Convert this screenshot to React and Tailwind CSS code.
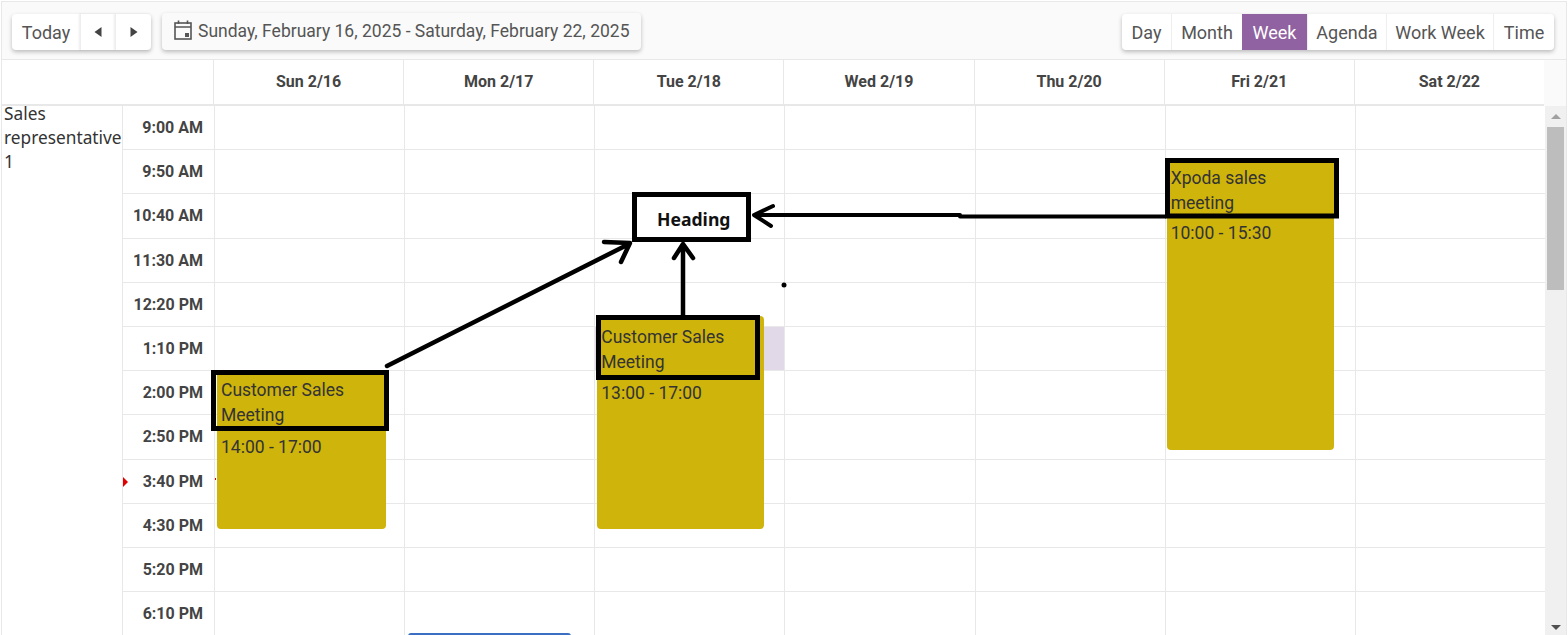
import React from 'react';

const days = ['Sun 2/16', 'Mon 2/17', 'Tue 2/18', 'Wed 2/19', 'Thu 2/20', 'Fri 2/21', 'Sat 2/22'];
const times = ['9:00 AM', '9:50 AM', '10:40 AM', '11:30 AM', '12:20 PM', '1:10 PM', '2:00 PM', '2:50 PM', '3:40 PM', '4:30 PM', '5:20 PM', '6:10 PM'];
const views = ['Day', 'Month', 'Week', 'Agenda', 'Work Week', 'Time'];
const viewWidths = ['w-[49px]', 'w-[71px]', 'w-[65px]', 'w-[79px]', 'w-[107px]', 'w-[61px]'];

const Event = ({ title, time, className, gap }) => (
  <div className={`absolute rounded-[4px] bg-[#cfb40b] text-[#333] text-[17.5px] leading-[25px] ${className}`}>
    <div>{title}</div>
    <div className={gap}>{time}</div>
  </div>
);

const DayColumn = ({ index }) => (
  <div className="relative flex-1 min-w-0 border-l border-[#e8e8e8]">
    {times.map((t, row) => (
      <div
        key={t}
        className={`h-[44.2px] border-b border-[#e8e8e8] ${index === 2 && row === 5 ? 'bg-[#e2d9e8]' : ''}`}
      />
    ))}
    {index === 0 && (
      <>
        <div className="absolute left-0 top-[372px] w-[1px] h-[2px] bg-[#e00000]" />
        <Event className="left-[2px] top-[265px] w-[169px] h-[158px] pt-[7px] pl-[4px]" gap="mt-[7px]" title={<>Customer Sales<br />Meeting</>} time="14:00 - 17:00" />
      </>
    )}
    {index === 2 && (
      <Event className="left-[2px] top-[210px] w-[167px] h-[213px] pt-[9px] pl-[4px]" gap="mt-[6px]" title={<>Customer Sales<br />Meeting</>} time="13:00 - 17:00" />
    )}
    {index === 5 && (
      <Event className="left-[1px] top-[54px] w-[167px] h-[290px] pt-[6px] pl-[4px]" gap="mt-[5px]" title={<>Xpoda sales<br />meeting</>} time="10:00 - 15:30" />
    )}
    {index === 1 && (
      <div className="absolute left-[3px] top-[527px] w-[163px] h-[10px] rounded-[3px] bg-[#3a6fc4]" />
    )}
  </div>
);

// the hand drawn markup lying over the calendar
const Annotations = () => (
  <svg className="absolute inset-0 pointer-events-none" width="1568" height="635" fill="none" stroke="#000">
    <rect x="213.5" y="372.5" width="173" height="56" strokeWidth="5" />
    <rect x="598.5" y="317.5" width="159" height="60" strokeWidth="5" />
    <rect x="1167.5" y="160.5" width="169" height="55.5" strokeWidth="5" />
    <path d="M387 366 L629 244 M604 242 L630 243 L621 262" strokeWidth="4.5" strokeLinecap="round" strokeLinejoin="round" />
    <path d="M683 316 L683 245 M674 258 L683 244 L693 258" strokeWidth="4.5" strokeLinecap="round" strokeLinejoin="round" />
    <path d="M1165 216.5 L960 216.5 L960 215 L754 215 M773 206 L754 215 L771 226" strokeWidth="4" strokeLinecap="round" strokeLinejoin="round" />
    <circle cx="784" cy="285" r="2.5" fill="#000" stroke="none" />
  </svg>
);

export default function App() {
  return (
    <div className="relative w-[1568px] h-[635px] overflow-hidden bg-white font-['Roboto',sans-serif] text-[#3d3d3d]">
      <div className="mx-[1px] mt-[1px] border-x border-t border-[#e8e8e8] h-[634px] flex flex-col">
        {/* toolbar */}
        <div className="h-[58px] shrink-0 bg-[#fafafa] border-b border-[#e8e8e8] flex items-start justify-between pt-[11px] pl-[10px] pr-[12px] text-[18px]">
          <div className="flex gap-[11px]">
            <div className="flex h-[36px] mt-[1px] rounded-[4px] bg-white shadow-[0_2px_4px_rgba(0,0,0,0.25)]">
              <button className="w-[68px] flex items-center justify-center text-[#555]">Today</button>
              <button className="w-[35px] flex items-center justify-center border-l border-[#eee] shadow-[-1px_0_2px_rgba(0,0,0,0.08)]">
                <svg width="8" height="10" viewBox="0 0 8 10"><path d="M7.5 0 V10 L0.5 5 Z" fill="#444" /></svg>
              </button>
              <button className="w-[36px] flex items-center justify-center border-l border-[#eee] shadow-[-1px_0_2px_rgba(0,0,0,0.08)]">
                <svg width="8" height="10" viewBox="0 0 8 10"><path d="M0.5 0 V10 L7.5 5 Z" fill="#444" /></svg>
              </button>
            </div>
            <button className="flex h-[37px] w-[479px] items-center whitespace-nowrap rounded-[4px] bg-[#fafafa] pl-[12px] text-[17.5px] text-[#555] shadow-[0_2px_4px_rgba(0,0,0,0.25)]">
              <svg width="18" height="20" viewBox="0 0 18 20" className="mr-[6px] mb-[3px] shrink-0" fill="none" stroke="#555" strokeWidth="1.6">
                <rect x="1" y="3" width="16" height="16" />
                <path d="M1 7 H17 M4.5 0.5 V4 M13.5 0.5 V4" />
                <rect x="11" y="13" width="4" height="4" fill="#555" stroke="none" />
              </svg>
              Sunday, February 16, 2025 - Saturday, February 22, 2025
            </button>
          </div>
          <div className="flex h-[36px] mt-[1px] rounded-[4px] bg-white shadow-[0_2px_4px_rgba(0,0,0,0.25)]">
            {views.map((v, i) => (
              <button
                key={v}
                className={`${viewWidths[i]} flex items-center justify-center ${v === 'Week' ? 'bg-[#9062a1] text-white' : 'text-[#555]'} ${i > 0 && v !== 'Week' ? 'border-l border-[#eee]' : ''}`}
              >
                {v}
              </button>
            ))}
          </div>
        </div>

        {/* day header */}
        <div className="h-[46px] shrink-0 flex bg-[#fafafa] text-[16px] font-bold text-[#444]">
          <div className="w-[1542px] shrink-0 flex bg-white border-b-2 border-[#e8e8e8]">
            <div className="w-[211px] shrink-0" />
            {days.map((d) => (
              <div key={d} className="flex-1 min-w-0 border-l border-[#e8e8e8] flex items-center justify-center pb-[1px]">
                {d}
              </div>
            ))}
          </div>
        </div>

        {/* schedule body */}
        <div className="flex-1 min-h-0 flex">
          <div className="w-[120px] shrink-0 pl-[2px] -mt-[4px] font-['Noto_Sans',sans-serif] text-[17.3px] leading-[24px] text-[#333]">
            Sales representative 1
          </div>
          <div className="w-[92px] shrink-0 border-l border-[#e8e8e8]">
            {times.map((t) => (
              <div key={t} className="relative h-[44.2px] border-b border-[#e8e8e8] flex items-center justify-end pr-[11px] pt-[1px] text-[16px] font-bold text-[#444]">
                {t === '3:40 PM' && (
                  <span className="absolute left-0 top-[17px] border-y-[5px] border-l-[5px] border-y-transparent border-l-[#e00000]" />
                )}
                {t}
              </div>
            ))}
          </div>
          <div className="w-[1331px] shrink-0 flex">
            {days.map((d, i) => (
              <DayColumn key={d} index={i} />
            ))}
          </div>
          {/* scrollbar */}
          <div className="w-[21px] shrink-0 bg-[#f0f0f0] flex flex-col items-center relative">
            <div className="h-[21px] flex items-center justify-center">
              <div className="border-x-[5px] border-b-[5px] border-x-transparent border-b-[#a0a0a0]" />
            </div>
            <div className="w-[17px] h-[163px] bg-[#bdbdbd]" />
            <div className="absolute bottom-[5px] border-x-[5px] border-t-[5px] border-x-transparent border-t-[#505050]" />
          </div>
        </div>
      </div>

      {/* heading box */}
      <div className="absolute left-[632px] top-[192px] w-[119px] h-[50px] border-[5px] border-black bg-white flex items-center pl-[20px] pt-[4px] font-['Noto_Sans',sans-serif] text-[17.6px] font-bold text-[#111]">
        Heading
      </div>
      <Annotations />
    </div>
  );
}
